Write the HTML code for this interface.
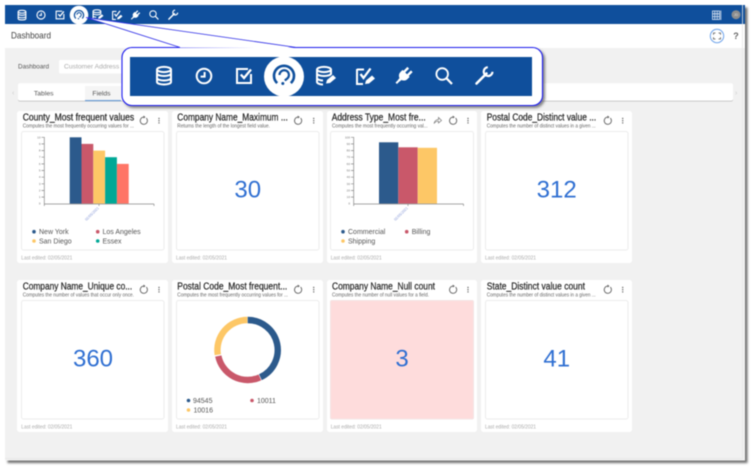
<!DOCTYPE html>
<html><head><meta charset="utf-8"><title>Dashboard</title>
<style>
html,body{margin:0;padding:0;background:#fff;width:754px;height:470px;overflow:hidden}
svg{display:block;filter:blur(.4px)}
text{font-family:"Liberation Sans",sans-serif}
.t{font-size:10px;fill:#222;stroke:#222;stroke-width:.2}
.s{font-size:5.3px;fill:#666}
.l{font-size:5px;fill:#aaa}
.n{font-size:24px;fill:#2f6fd2;text-anchor:middle}
.lg{font-size:7px;fill:#555}
.tk{font-size:3px;fill:#777;text-anchor:end}
.card{fill:#fff}
.box{fill:#fff;stroke:#ececec;stroke-width:1}
</style></head><body>
<svg width="754" height="470" viewBox="0 0 754 470" xmlns="http://www.w3.org/2000/svg">
<defs>
<filter id="sh" x="-10%" y="-10%" width="120%" height="130%"><feDropShadow dx="2" dy="2" stdDeviation="1.2" flood-color="#555" flood-opacity=".7"/></filter>
<filter id="ps" x="-3%" y="-3%" width="106%" height="106%"><feDropShadow dx="2.5" dy="2.5" stdDeviation="1" flood-color="#444" flood-opacity=".75"/></filter>
<clipPath id="cc"><rect x="130" y="57" width="402" height="39"/></clipPath>
<g id="db" fill="none" stroke="#fff" stroke-width="2"><ellipse cx="0" cy="-6" rx="7" ry="2.6"/><path d="M-7 -6V6.5C-7 8 -3.5 9 0 9S7 8 7 6.5V-6M-7 -2C-7 -.5 -3.5 .5 0 .5S7 -.5 7 -2M-7 2.5C-7 4 -3.5 5 0 5S7 4 7 2.5"/></g>
<g id="clock" fill="none" stroke="#fff" stroke-width="2"><circle r="7.3"/><path d="M.6 -4V.6H-3.4"/></g>
<g id="check" fill="none" stroke="#fff" stroke-width="2"><path d="M7 -2V7H-7V-7H4"/><path d="M-3.2 -1.5L0 2L7 -6.5" stroke-width="2.3"/></g>
<g id="gauge" fill="none" stroke="#0f4f9c"><path d="M-6.8 7.6A10 10 0 1 1 6.8 7.6" stroke-width="2.6"/><path d="M-4.5 -.5A4.7 4.7 0 1 1 3.3 3L.8 5" stroke-width="2.2"/><circle cx="-1.2" cy="8" r="1.5" fill="#0f4f9c" stroke="none"/></g>
<g id="pen"><path d="M1 8L2 4.5L8 -.5L11 2.5L5 7.5Z" fill="#fff"/></g>
<g id="dbe"><g fill="none" stroke="#fff" stroke-width="2"><ellipse cx="-2" cy="-6" rx="7" ry="2.6"/><path d="M-9 -6V6.5C-9 8 -5.5 9 -3 9M5 -6V-1M-9 -2C-9 -.5 -5.5 .5 -2 .5S5 -.5 5 -2M-9 2.5C-9 4 -5.5 5 -3 5"/></g><use href="#pen" x="-1"/></g>
<g id="che"><g fill="none" stroke="#fff" stroke-width="2"><path d="M-8 -6.5H-1M-8 -7V8H-2"/><path d="M-4.5 -2L-1.5 2L5.5 -7.5" stroke-width="2.3"/></g><use href="#pen" x="-1"/></g>
<g id="plug"><g transform="rotate(45)"><path d="M-5 -3H5V0C5 3 2.8 4.5 1.3 5V7H-1.3V5C-2.8 4.5 -5 3 -5 0Z" fill="#fff"/><rect x="-3.7" y="-8.5" width="2.4" height="6" fill="#fff"/><rect x="1.3" y="-8.5" width="2.4" height="6" fill="#fff"/><rect x="-1" y="6" width="2" height="5" fill="#fff"/></g></g>
<g id="search" fill="none" stroke="#fff"><circle cx="-1.8" cy="-2" r="5.8" stroke-width="1.8"/><path d="M2.5 2.3L8 8" stroke-width="2.2"/></g>
<g id="wrench" fill="none" stroke="#fff"><path d="M-7.5 7.5L2.5 -2.5" stroke-width="2.6" stroke-linecap="round"/><path d="M8.5 -4.2A4.4 4.4 0 1 1 3.8 -8.8" stroke-width="2.2"/></g>
<g id="ref" fill="none" stroke="#666" stroke-width=".9"><path d="M2.6 -2.6A3.6 3.6 0 1 1 0 -3.6"/><path d="M-.2 -5.2L1.8 -3.6L-.2 -2.2" fill="#666" stroke="none"/></g>
<g id="dots" fill="#666"><circle cy="-2.2" r=".7"/><circle cy="0" r=".7"/><circle cy="2.2" r=".7"/></g>
</defs>

<!-- panel -->
<rect x="5" y="5" width="740" height="455.5" fill="#f1f1f1" filter="url(#ps)"/>
<rect x="5" y="24" width="740" height="24" fill="#fff"/>
<rect x="5" y="5" width="740" height="19" fill="#0f4f9c"/>
<path d="M5 458.5H742.5V5" fill="none" stroke="#e6e6e6" stroke-width=".8"/>

<!-- small toolbar -->
<circle cx="79" cy="15" r="9.3" fill="#fff"/>
<use href="#db" transform="translate(22 15) scale(.55)"/>
<use href="#clock" transform="translate(41 15) scale(.55)"/>
<use href="#check" transform="translate(60 15) scale(.55)"/>
<use href="#gauge" transform="translate(79 15) scale(.46)"/>
<use href="#dbe" transform="translate(98 14.5) scale(.55)"/>
<use href="#che" transform="translate(117 15) scale(.55)"/>
<use href="#plug" transform="translate(135.5 15) scale(.55)"/>
<use href="#search" transform="translate(154 15) scale(.55)"/>
<use href="#wrench" transform="translate(173 15) scale(.55)"/>

<!-- top right -->
<g fill="none" stroke="#dfe8f4" stroke-width=".8"><rect x="712.5" y="11" width="7" height="8.5"/><path d="M714.8 11V19.5M717.2 11V19.5M712.5 13.8H719.5M712.5 16.6H719.5"/><path d="M720.8 10.5V20"/></g>
<circle cx="736" cy="14.7" r="4.5" fill="#8d8d8d"/>
<text x="736" y="16" font-size="3.5" fill="#ddd" text-anchor="middle">JD</text>
<circle cx="717" cy="36" r="6.7" fill="#fff" stroke="#6ea3ea" stroke-width="1"/>
<path d="M713.5 34.8V33H715.5M718.5 33H720.5V34.8M720.5 37.2V39H718.5M715.5 39H713.5V37.2" fill="none" stroke="#555" stroke-width=".8"/>
<text x="736" y="39" font-size="9" font-weight="bold" fill="#666" text-anchor="middle">?</text>

<!-- header -->
<text x="11" y="38.4" font-size="9.2" fill="#444" textLength="40" lengthAdjust="spacingAndGlyphs">Dashboard</text>
<text x="18" y="68.6" font-size="6.6" fill="#555" textLength="31" lengthAdjust="spacingAndGlyphs">Dashboard</text>
<rect x="59" y="60" width="110" height="13.5" rx="1.5" fill="#fff"/>
<text x="64" y="68.6" font-size="6.6" fill="#aaa" textLength="62" lengthAdjust="spacingAndGlyphs">Customer Address D</text>

<!-- tabs -->
<text x="12" y="95" font-size="7" fill="#ccc">‹</text>
<text x="735" y="95" font-size="7" fill="#ccc">›</text>
<rect x="18" y="84" width="715" height="17.5" rx="2" fill="#bbb"/>
<rect x="18" y="83.3" width="715" height="17.5" rx="2" fill="#fff"/>
<rect x="85" y="86" width="36" height="14.5" fill="#f5f5f5"/>
<rect x="85" y="100" width="36" height="1.2" fill="#6d9fd8"/>
<text x="43.7" y="95.3" font-size="6.8" fill="#555" text-anchor="middle">Tables</text>
<text x="101.5" y="95.3" font-size="6.8" fill="#555" text-anchor="middle">Fields</text>

<!-- cards row 1 -->
<rect class="card" x="17" y="111" width="151" height="152" rx="2.5"/>
<rect class="card" x="172" y="111" width="151" height="152" rx="2.5"/>
<rect class="card" x="327" y="111" width="150" height="152" rx="2.5"/>
<rect class="card" x="481" y="111" width="151" height="152" rx="2.5"/>
<!-- cards row 2 -->
<rect class="card" x="17" y="280" width="151" height="152" rx="2.5"/>
<rect class="card" x="172" y="280" width="151" height="152" rx="2.5"/>
<rect class="card" x="327" y="280" width="150" height="152" rx="2.5"/>
<rect class="card" x="481" y="280" width="151" height="152" rx="2.5"/>

<rect class="box" x="21.5" y="131.5" width="142.5" height="118.5" rx="2"/>
<rect class="box" x="176.5" y="131.5" width="142.5" height="118.5" rx="2"/>
<rect class="box" x="330.5" y="131.5" width="143" height="118.5" rx="2"/>
<rect class="box" x="485.5" y="131.5" width="142.5" height="118.5" rx="2"/>
<rect class="box" x="21.5" y="300.5" width="142.5" height="118.5" rx="2"/>
<rect class="box" x="176.5" y="300.5" width="142.5" height="118.5" rx="2"/>
<rect x="330.5" y="300.5" width="143" height="118.5" rx="1.5" fill="#fedcdc" stroke="#f4e4e4"/>
<rect class="box" x="485.5" y="300.5" width="142.5" height="118.5" rx="2"/>

<!-- titles -->
<text class="t" x="22.7" y="120.7" textLength="111.5" lengthAdjust="spacingAndGlyphs">County_Most frequent values</text>
<text class="t" x="177.3" y="120.7" textLength="110.5" lengthAdjust="spacingAndGlyphs">Company Name_Maximum ...</text>
<text class="t" x="331.7" y="120.7" textLength="94" lengthAdjust="spacingAndGlyphs">Address Type_Most fre...</text>
<text class="t" x="486.7" y="120.7" textLength="109.5" lengthAdjust="spacingAndGlyphs">Postal Code_Distinct value ...</text>
<text class="t" x="22.7" y="289.7" textLength="109.5" lengthAdjust="spacingAndGlyphs">Company Name_Unique co...</text>
<text class="t" x="177.3" y="289.7" textLength="110" lengthAdjust="spacingAndGlyphs">Postal Code_Most frequent...</text>
<text class="t" x="332" y="289.7" textLength="103" lengthAdjust="spacingAndGlyphs">Company Name_Null count</text>
<text class="t" x="486.7" y="289.7" textLength="98.3" lengthAdjust="spacingAndGlyphs">State_Distinct value count</text>

<!-- subtitles -->
<text class="s" x="22.7" y="127.6" textLength="111.3" lengthAdjust="spacingAndGlyphs">Computes the most frequently occurring values for ...</text>
<text class="s" x="177.3" y="127.6" textLength="92.7" lengthAdjust="spacingAndGlyphs">Returns the length of the longest field value.</text>
<text class="s" x="332" y="127.6" textLength="95.7" lengthAdjust="spacingAndGlyphs">Computes the most frequently occurring val...</text>
<text class="s" x="486.7" y="127.6" textLength="109" lengthAdjust="spacingAndGlyphs">Computes the number of distinct values in a given ...</text>
<text class="s" x="22.7" y="296.7" textLength="111.3" lengthAdjust="spacingAndGlyphs">Computes the number of values that occur only once.</text>
<text class="s" x="177.3" y="296.7" textLength="110.7" lengthAdjust="spacingAndGlyphs">Computes the most frequently occurring values for ...</text>
<text class="s" x="332" y="296.7" textLength="97" lengthAdjust="spacingAndGlyphs">Computes the number of null values for a field.</text>
<text class="s" x="486.7" y="296.7" textLength="109" lengthAdjust="spacingAndGlyphs">Computes the number of distinct values in a given ...</text>

<!-- last edited -->
<text class="l" x="21.3" y="259.6" textLength="51" lengthAdjust="spacingAndGlyphs">Last edited: 02/05/2021</text>
<text class="l" x="176" y="259.6" textLength="51" lengthAdjust="spacingAndGlyphs">Last edited: 02/05/2021</text>
<text class="l" x="330.7" y="259.6" textLength="51" lengthAdjust="spacingAndGlyphs">Last edited: 02/05/2021</text>
<text class="l" x="485" y="259.6" textLength="51" lengthAdjust="spacingAndGlyphs">Last edited: 02/05/2021</text>
<text class="l" x="21.3" y="428.6" textLength="51" lengthAdjust="spacingAndGlyphs">Last edited: 02/05/2021</text>
<text class="l" x="176" y="428.6" textLength="51" lengthAdjust="spacingAndGlyphs">Last edited: 02/05/2021</text>
<text class="l" x="330.7" y="428.6" textLength="51" lengthAdjust="spacingAndGlyphs">Last edited: 02/05/2021</text>
<text class="l" x="485" y="428.6" textLength="51" lengthAdjust="spacingAndGlyphs">Last edited: 02/05/2021</text>

<!-- card icons -->
<use href="#ref" x="143.7" y="120.7"/><use href="#dots" x="159" y="120.7"/>
<use href="#ref" x="298" y="120.7"/><use href="#dots" x="313.7" y="120.7"/>
<use href="#ref" x="453" y="120.7"/><use href="#dots" x="468" y="120.7"/>
<path d="M434 123.5C434.5 120.5 437 119.5 438.5 119.5V117.5L441.5 120.5L438.5 123V121.2C436.5 121.2 435 122 434 123.5Z" fill="none" stroke="#777" stroke-width=".7"/>
<use href="#ref" x="607.7" y="120.7"/><use href="#dots" x="622.7" y="120.7"/>
<use href="#ref" x="143.7" y="289.7"/><use href="#dots" x="159" y="289.7"/>
<use href="#ref" x="298" y="289.7"/><use href="#dots" x="313.7" y="289.7"/>
<use href="#ref" x="453" y="289.7"/><use href="#dots" x="468" y="289.7"/>
<use href="#ref" x="607.7" y="289.7"/><use href="#dots" x="622.7" y="289.7"/>

<!-- numbers -->
<text class="n" x="247.7" y="197.6">30</text>
<text class="n" x="556.7" y="197.6">312</text>
<text class="n" x="93" y="366.6">360</text>
<text class="n" x="402" y="366.6">3</text>
<text class="n" x="556.7" y="366.6">41</text>

<!-- bar chart 1 -->
<rect x="69.7" y="137.3" width="11.8" height="66.4" fill="#2c5a8c"/>
<rect x="81.5" y="143.9" width="11.8" height="59.8" fill="#c9586a"/>
<rect x="93.3" y="150.6" width="11.8" height="53.1" fill="#fdc766"/>
<rect x="105.1" y="157.2" width="11.8" height="46.5" fill="#00a896"/>
<rect x="116.9" y="163.9" width="11.8" height="39.8" fill="#ff7566"/>
<path d="M44.3 137V204H154M154 204V206M99 204V206M44.3 204V206M41.5 137.3H44.3M41.5 143.9H44.3M41.5 150.6H44.3M41.5 157.2H44.3M41.5 163.9H44.3M41.5 170.5H44.3M41.5 177.2H44.3M41.5 183.8H44.3M41.5 190.5H44.3M41.5 197.1H44.3" fill="none" stroke="#888" stroke-width=".7"/>
<text class="tk" x="40.5" y="138.3">10</text><text class="tk" x="40.5" y="144.9">9</text><text class="tk" x="40.5" y="151.6">8</text><text class="tk" x="40.5" y="158.2">7</text><text class="tk" x="40.5" y="164.9">6</text><text class="tk" x="40.5" y="171.5">5</text><text class="tk" x="40.5" y="178.2">4</text><text class="tk" x="40.5" y="184.8">3</text><text class="tk" x="40.5" y="191.5">2</text><text class="tk" x="40.5" y="198.1">1</text><text class="tk" x="40.5" y="204.7">0</text>
<text transform="translate(86.5 221) rotate(-45)" font-size="3.6" fill="#8a9bd8" textLength="18" lengthAdjust="spacingAndGlyphs">02/05/2021</text>
<circle cx="34" cy="231.7" r="1.8" fill="#2c5a8c"/><text class="lg" x="39" y="234">New York</text>
<circle cx="97.7" cy="231.7" r="1.8" fill="#c9586a"/><text class="lg" x="102.5" y="234">Los Angeles</text>
<circle cx="34" cy="241" r="1.8" fill="#fdc766"/><text class="lg" x="39" y="243.4">San Diego</text>
<circle cx="97.7" cy="241" r="1.8" fill="#00a896"/><text class="lg" x="102.5" y="243.4">Essex</text>

<!-- bar chart 2 -->
<rect x="379" y="142.3" width="19.3" height="61.4" fill="#2c5a8c"/>
<rect x="398.3" y="147.3" width="19.4" height="56.4" fill="#c9586a"/>
<rect x="417.7" y="147.8" width="19.3" height="55.9" fill="#fdc766"/>
<path d="M353.7 137V204H463.5M463.5 204V206M408 204V206M353.7 204V206M351 137.3H353.7M351 143.9H353.7M351 150.6H353.7M351 157.2H353.7M351 163.9H353.7M351 170.5H353.7M351 177.2H353.7M351 183.8H353.7M351 190.5H353.7M351 197.1H353.7" fill="none" stroke="#888" stroke-width=".7"/>
<text class="tk" x="350" y="138.3">100</text><text class="tk" x="350" y="144.9">90</text><text class="tk" x="350" y="151.6">80</text><text class="tk" x="350" y="158.2">70</text><text class="tk" x="350" y="164.9">60</text><text class="tk" x="350" y="171.5">50</text><text class="tk" x="350" y="178.2">40</text><text class="tk" x="350" y="184.8">30</text><text class="tk" x="350" y="191.5">20</text><text class="tk" x="350" y="198.1">10</text><text class="tk" x="350" y="204.7">0</text>
<text transform="translate(395.5 221) rotate(-45)" font-size="3.6" fill="#8a9bd8" textLength="18" lengthAdjust="spacingAndGlyphs">02/05/2021</text>
<circle cx="343" cy="231.7" r="1.8" fill="#2c5a8c"/><text class="lg" x="348" y="234">Commercial</text>
<circle cx="406.7" cy="231.7" r="1.8" fill="#c9586a"/><text class="lg" x="411.7" y="234">Billing</text>
<circle cx="343" cy="241" r="1.8" fill="#fdc766"/><text class="lg" x="348" y="243.4">Shipping</text>

<!-- donut -->
<g fill="none" stroke-width="6.4">
<path d="M247.7 320A30 30 0 0 1 260.4 377.2" stroke="#2c5a8c"/>
<path d="M259.9 377.4A30 30 0 0 1 218.3 356" stroke="#c9586a"/>
<path d="M217.8 354.8A30 30 0 0 1 247.4 320" stroke="#fdc766"/>
</g>
<circle cx="188.5" cy="400.5" r="1.8" fill="#2c5a8c"/><text class="lg" x="193" y="403">94545</text>
<circle cx="252" cy="400.5" r="1.8" fill="#c9586a"/><text class="lg" x="257" y="403">10011</text>
<circle cx="188.5" cy="410" r="1.8" fill="#fdc766"/><text class="lg" x="193.5" y="412.4">10016</text>

<!-- callout -->
<rect x="122" y="47.5" width="420.5" height="58" rx="10" fill="#fff" stroke="#1a1aee" stroke-width="1.1" filter="url(#sh)"/>
<path d="M86 17.5L180 47.6L296 48.2Z" fill="#fff"/>
<path d="M86 17.5L180 47.4M86 17.5L296 47.4" fill="none" stroke="#2a2ae6" stroke-width=".8"/>
<rect x="130" y="57" width="402" height="39" fill="#0f4f9c"/>
<circle cx="284" cy="76.5" r="20" fill="#fff" clip-path="url(#cc)"/>
<use href="#db" x="164" y="75.5"/>
<use href="#clock" x="204" y="76"/>
<use href="#check" x="244" y="76"/>
<use href="#gauge" x="284" y="75.5"/>
<use href="#dbe" x="326" y="75.5"/>
<use href="#che" x="365" y="76"/>
<use href="#plug" x="404" y="75.5"/>
<use href="#search" x="444" y="76"/>
<use href="#wrench" x="484" y="76"/>
</svg>
</body></html>
